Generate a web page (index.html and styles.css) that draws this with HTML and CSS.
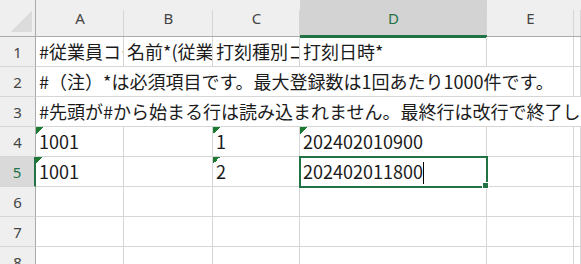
FILE: index.html
```html
<!DOCTYPE html>
<html lang="ja">
<head>
<meta charset="UTF-8" />
<title>打刻インポート</title>
<link rel="stylesheet" href="styles.css">
</head>
<body>
  <div class="sheet">
    <div class="corner"></div>
    <div class="col-head">A</div>
    <div class="col-head">B</div>
    <div class="col-head">C</div>
    <div class="col-head active">D</div>
    <div class="col-head">E</div>
    <div class="col-head"></div>

    <div class="row-head">1</div>
    <div class="cell">#従業員コード*</div>
    <div class="cell">名前*(従業員コードに紐づく名前)</div>
    <div class="cell">打刻種別コード*</div>
    <div class="cell">打刻日時*</div>
    <div class="cell"></div>
    <div class="cell"></div>

    <div class="row-head">2</div>
    <div class="cell span-5">#（注）*は必須項目です。最大登録数は1回あたり1000件です。</div>
    <div class="cell"></div>

    <div class="row-head">3</div>
    <div class="cell span-6">#先頭が#から始まる行は読み込まれません。最終行は改行で終了してください。</div>

    <div class="row-head">4</div>
    <div class="cell flag">1001</div>
    <div class="cell"></div>
    <div class="cell flag">1</div>
    <div class="cell flag">202402010900</div>
    <div class="cell"></div>
    <div class="cell"></div>

    <div class="row-head active">5</div>
    <div class="cell flag">1001</div>
    <div class="cell"></div>
    <div class="cell flag">2</div>
    <div class="cell selected">202402011800<span class="caret"></span></div>
    <div class="cell"></div>
    <div class="cell"></div>

    <div class="row-head">6</div>
    <div class="cell"></div><div class="cell"></div><div class="cell"></div>
    <div class="cell"></div><div class="cell"></div><div class="cell"></div>

    <div class="row-head">7</div>
    <div class="cell"></div><div class="cell"></div><div class="cell"></div>
    <div class="cell"></div><div class="cell"></div><div class="cell"></div>

    <div class="row-head">8</div>
    <div class="cell"></div><div class="cell"></div><div class="cell"></div>
    <div class="cell"></div><div class="cell"></div><div class="cell"></div>
  </div>
</body>
</html>
```

FILE: styles.css
```css
body {
  margin: 0;
  background: #fff;
  font-family: "Noto Sans CJK JP", sans-serif;
  color: #1b1b1b;
  overflow: hidden;
}
.sheet {
  display: grid;
  grid-template-columns: 36px 88px 89px 87px 187px 87px 1fr;
  grid-template-rows: 37px;
  grid-auto-rows: 30px;
}

/* Заголовки */
.corner {
  background: #efefef;
  border-right: 1px solid #ababab;
  border-bottom: 1px solid #ababab;
  display: flex;
  align-items: flex-end;
  padding: 0 0 4px 10px;
}
.corner::before {
  content: "";
  width: 22px;
  height: 22px;
  background: linear-gradient(to top left, #dcdcdc 50%, transparent 50%);
}
.col-head {
  background: #efefef linear-gradient(#d6d6d6, #d6d6d6) no-repeat right bottom / 1px 26px;
  border-bottom: 1px solid #ababab;
  display: flex;
  align-items: center;
  justify-content: center;
  font-family: "Noto Sans", sans-serif;
  font-size: 15px;
  color: #444;
}
.col-head.active {
  background-color: #d3d3d3;
  color: #217346;
  border-bottom: 3px solid #217346;
  margin-bottom: -1px;
}
.row-head {
  background: #efefef;
  border-right: 1px solid #ababab;
  border-bottom: 1px solid #d6d6d6;
  display: flex;
  align-items: center;
  justify-content: center;
  font-family: "Noto Sans", sans-serif;
  font-size: 15px;
  color: #444;
}
.row-head.active {
  background: #d9d9d9;
  color: #217346;
  border-right: 2px solid #217346;
}

/* Клітинки */
.cell {
  border-right: 1px solid #d6d6d6;
  border-bottom: 1px solid #d6d6d6;
  padding: 0 0 0 3px;
  font-size: 18px;
  line-height: 29px;
  white-space: nowrap;
  overflow: hidden;
}
.span-5 { grid-column: span 5; }
.span-6 { grid-column: span 6; border-right: none; }
.cell.flag {
  background: linear-gradient(135deg, #1b7a30 50%, transparent 50%) no-repeat left top / 7px 7px;
}
.cell.selected {
  position: relative;
  z-index: 1;
  overflow: visible;
  outline: 2px solid #217346;
  outline-offset: -1px;
}
.cell.selected::after {
  content: "";
  position: absolute;
  right: -3px;
  bottom: -3px;
  width: 5px;
  height: 5px;
  background: #217346;
  border: 1px solid #fff;
}
.caret {
  display: inline-block;
  width: 1px;
  height: 22px;
  background: #000;
  vertical-align: -5px;
}
```
